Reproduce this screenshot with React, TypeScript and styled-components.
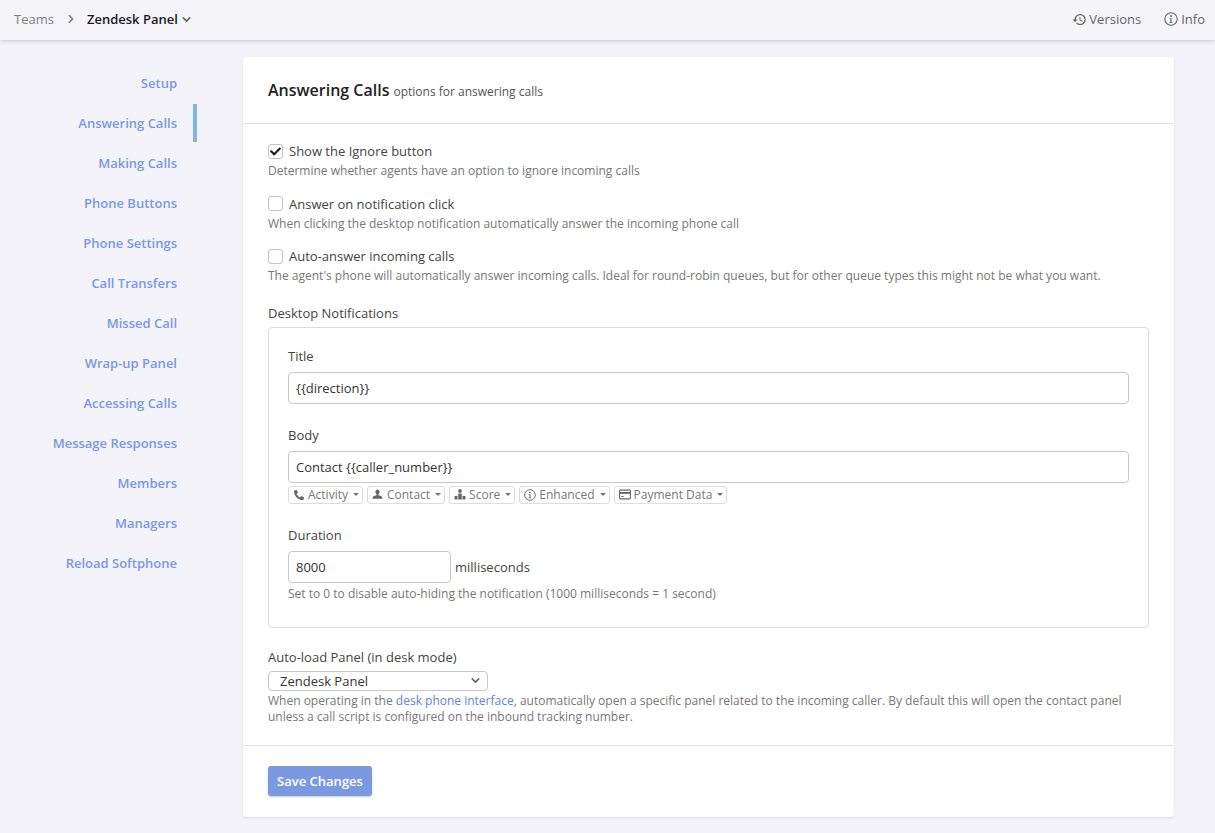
import { ReactNode } from 'react';
import styled, { createGlobalStyle } from 'styled-components';
import { FaPhoneAlt, FaCheck, FaChevronRight } from 'react-icons/fa';
import { FiChevronDown } from 'react-icons/fi';
import { MdHistory } from 'react-icons/md';

const GlobalStyle = createGlobalStyle`
  html, body {
    margin: 0;
    padding: 0;
    background: #f4f3f9;
    font-family: "Open Sans", "Liberation Sans", sans-serif;
    color: #333;
  }
  * { box-sizing: border-box; }
`;

const Page = styled.div`
  width: 1215px;
  height: 833px;
  overflow: hidden;
`;

const TopBar = styled.header`
  height: 40px;
  display: flex;
  align-items: center;
  justify-content: space-between;
  padding: 0 10px 2px 14px;
  background: #f5f4f9;
  box-shadow: 0 1px 4px rgba(0, 0, 0, 0.2);
  font-size: 13px;
`;

const Crumbs = styled.div`
  display: flex;
  align-items: center;
`;

const CrumbLink = styled.span`
  color: #808080;
`;

const CrumbSep = styled.span`
  display: flex;
  margin: 0 11px 0 12px;
  color: #808080;
  font-size: 10px;
`;

const CrumbCurrent = styled.span`
  display: flex;
  align-items: center;
  gap: 2px;
  color: #1a1a1a;
  font-weight: 600;
`;

const TopActions = styled.div`
  display: flex;
  align-items: center;
  gap: 23px;
`;

const TopAction = styled.span<{ $gap: number }>`
  display: flex;
  align-items: center;
  gap: ${(p) => p.$gap}px;
  color: #666;
  font-size: 13px;
`;

const Main = styled.div`
  display: flex;
  align-items: flex-start;
  padding-top: 17px;
`;

const SideNav = styled.nav`
  width: 197px;
  margin-top: 7px;
  flex-shrink: 0;
`;

const NavItem = styled.div<{ $active?: boolean }>`
  height: 38px;
  margin-bottom: 2px;
  display: flex;
  align-items: center;
  justify-content: flex-end;
  padding-right: 16px;
  border-right: 4px solid ${(p) => (p.$active ? '#7fb4e6' : 'transparent')};
  color: #769ae6;
  font-size: 13px;
  font-weight: 600;
`;

const Card = styled.section`
  width: 931px;
  height: 760px;
  margin-left: 46px;
  background: #fff;
  border-radius: 4px;
  box-shadow: 0 1px 3px rgba(0, 0, 0, 0.1);
`;

const CardHead = styled.div`
  height: 67px;
  padding: 22px 25px 0;
  border-bottom: 1px solid #e2e2e2;
`;

const CardTitle = styled.span`
  font-size: 16px;
  font-weight: 600;
  color: #222;
`;

const CardSub = styled.span`
  margin-left: 4px;
  font-size: 12px;
  color: #555;
`;

const CardBody = styled.div`
  height: 622px;
  padding: 17px 25px 0;
  border-bottom: 1px solid #e2e2e2;
`;

const CheckRow = styled.div`
  margin-bottom: 14.5px;
`;

const CheckLine = styled.label`
  display: flex;
  align-items: center;
  gap: 6px;
  height: 20px;
  margin-bottom: 2px;
  font-size: 13px;
  color: #444;
`;

const Box = styled.span`
  width: 15px;
  height: 15px;
  display: flex;
  align-items: center;
  justify-content: center;
  border: 1px solid #c4c4c4;
  border-radius: 3px;
  background: #fff;
  color: #222;
  font-size: 11px;
`;

const Help = styled.div`
  font-size: 12px;
  line-height: 16px;
  color: #777;
`;

const SectionLabel = styled.div`
  margin-top: 18.5px;
  height: 20px;
  line-height: 20px;
  font-size: 13px;
  color: #444;
`;

const Fieldset = styled.div`
  height: 301px;
  margin-top: 4px;
  padding: 18px 19px 0;
  border: 1px solid #ddd;
  border-radius: 4px;
`;

const FieldLabel = styled.div`
  height: 20px;
  line-height: 20px;
  margin-bottom: 6px;
  font-size: 13px;
  color: #444;
`;

const TextField = styled.div<{ $width?: number }>`
  width: ${(p) => (p.$width ? `${p.$width}px` : '100%')};
  height: 32px;
  display: flex;
  align-items: center;
  padding: 0 7px;
  border: 1px solid #c8c8c8;
  border-radius: 4px;
  font-size: 13px;
  color: #333;
`;

const Field = styled.div<{ $gap: number }>`
  margin-bottom: ${(p) => p.$gap}px;
`;

const TokenRow = styled.div`
  display: flex;
  gap: 4px;
  margin-top: 3px;
`;

const Token = styled.span`
  height: 18px;
  display: flex;
  align-items: center;
  gap: 3px;
  padding: 0 3px 0 4px;
  border: 1px solid #ddd;
  border-radius: 3px;
  font-size: 12px;
  color: #777;
`;

const TokenIcon = styled.span`
  width: 12px;
  display: flex;
  justify-content: center;
  color: #666;
`;

const Caret = styled.span`
  width: 0;
  height: 0;
  margin-left: 2px;
  border-left: 3px solid transparent;
  border-right: 3px solid transparent;
  border-top: 3px solid #777;
`;

const InlineRow = styled.div`
  display: flex;
  align-items: center;
  gap: 4px;
  font-size: 13px;
  color: #444;
`;

const DurationHelp = styled(Help)`
  margin-top: 3px;
`;

const AutoLoad = styled.div`
  margin-top: 19px;
`;

const SelectBox = styled.div`
  width: 220px;
  height: 20px;
  margin-top: -2px;
  display: flex;
  align-items: center;
  justify-content: space-between;
  padding: 0 5px 0 11px;
  border: 1px solid #c8c8c8;
  border-radius: 4px;
  font-size: 13px;
  color: #333;
`;

const HelpLink = styled.a`
  color: #5b87d8;
`;

const AutoLoadHelp = styled(Help)`
  margin-top: 2px;
`;

const CardFoot = styled.div`
  padding: 20px 25px 0;
`;

const SaveButton = styled.button`
  width: 104px;
  height: 30px;
  padding: 0;
  border: 0;
  border-radius: 3px;
  background: #7b99e0;
  box-shadow: 0 1px 2px rgba(0, 0, 0, 0.2);
  color: #fff;
  font-family: inherit;
  font-size: 13px;
  font-weight: 600;
`;

const navItems = [
  'Setup',
  'Answering Calls',
  'Making Calls',
  'Phone Buttons',
  'Phone Settings',
  'Call Transfers',
  'Missed Call',
  'Wrap-up Panel',
  'Accessing Calls',
  'Message Responses',
  'Members',
  'Managers',
  'Reload Softphone',
];

const checks = [
  {
    label: 'Show the Ignore button',
    help: 'Determine whether agents have an option to ignore incoming calls',
    checked: true,
  },
  {
    label: 'Answer on notification click',
    help: 'When clicking the desktop notification automatically answer the incoming phone call',
  },
  {
    label: 'Auto-answer incoming calls',
    help: "The agent's phone will automatically answer incoming calls. Ideal for round-robin queues, but for other queue types this might not be what you want.",
  },
];

const InfoIcon = ({ size }: { size: number }) => (
  <svg width={size} height={size} viewBox="0 0 14 14" fill="none" stroke="currentColor">
    <circle cx="7" cy="7" r="6.2" strokeWidth="1.1" />
    <circle cx="7" cy="4" r="1" fill="currentColor" stroke="none" />
    <path d="M5.6 6.2H7.6V10H8.6V10.8H5.4V10H6.4V7H5.6z" fill="currentColor" stroke="none" />
  </svg>
);

const UserIcon = () => (
  <svg width="11" height="11" viewBox="0 0 11 11" fill="currentColor">
    <path d="M3.4 2.8C3.4 1.3 4.3.4 5.5.4s2.1.9 2.1 2.4c0 1.2-.5 2.2-1.2 2.6v.9c1.5.4 3.4 1 3.9 1.8v1.6H.7V8.1c.5-.8 2.4-1.4 3.9-1.8v-.9C3.9 5 3.4 4 3.4 2.8z" />
  </svg>
);

const ScoreIcon = () => (
  <svg width="13" height="13" viewBox="0 0 13 13" fill="currentColor">
    <circle cx="6.5" cy="2.6" r="2" />
    <path d="M4.6 5.4h3.8V12H4.6zM.6 8h3.2v4H.6zM9.2 8h3.2v4H9.2z" />
  </svg>
);

const CardIcon = () => (
  <svg width="13" height="11" viewBox="0 0 13 11" fill="none" stroke="currentColor">
    <rect x="0.6" y="0.8" width="11.8" height="9.4" rx="1" strokeWidth="1.2" />
    <path d="M.6 3.8h11.8" strokeWidth="2" />
    <path d="M2.2 7.8h3" strokeWidth="1" />
  </svg>
);

const tokens: { label: string; icon: ReactNode }[] = [
  { label: 'Activity', icon: <FaPhoneAlt size={10} /> },
  { label: 'Contact', icon: <UserIcon /> },
  { label: 'Score', icon: <ScoreIcon /> },
  { label: 'Enhanced', icon: <InfoIcon size={12} /> },
  { label: 'Payment Data', icon: <CardIcon /> },
];

export default function App() {
  return (
    <Page>
      <GlobalStyle />
      <TopBar>
        <Crumbs>
          <CrumbLink>Teams</CrumbLink>
          <CrumbSep>
            <FaChevronRight />
          </CrumbSep>
          <CrumbCurrent>
            Zendesk Panel <FiChevronDown size={13} color="#666" strokeWidth={3} />
          </CrumbCurrent>
        </Crumbs>
        <TopActions>
          <TopAction $gap={2}>
            <MdHistory size={15} /> Versions
          </TopAction>
          <TopAction $gap={3}>
            <InfoIcon size={14} /> Info
          </TopAction>
        </TopActions>
      </TopBar>
      <Main>
        <SideNav>
          {navItems.map((item) => (
            <NavItem key={item} $active={item === 'Answering Calls'}>
              {item}
            </NavItem>
          ))}
        </SideNav>
        <Card>
          <CardHead>
            <CardTitle>Answering Calls</CardTitle>
            <CardSub>options for answering calls</CardSub>
          </CardHead>
          <CardBody>
            {checks.map((c) => (
              <CheckRow key={c.label}>
                <CheckLine>
                  <Box>{c.checked && <FaCheck />}</Box>
                  {c.label}
                </CheckLine>
                <Help>{c.help}</Help>
              </CheckRow>
            ))}
            <SectionLabel>Desktop Notifications</SectionLabel>
            <Fieldset>
              <Field $gap={21}>
                <FieldLabel>Title</FieldLabel>
                <TextField>{'{{direction}}'}</TextField>
              </Field>
              <Field $gap={21}>
                <FieldLabel>Body</FieldLabel>
                <TextField>{'Contact {{caller_number}}'}</TextField>
                <TokenRow>
                  {tokens.map((t) => (
                    <Token key={t.label}>
                      <TokenIcon>{t.icon}</TokenIcon>
                      {t.label}
                      <Caret />
                    </Token>
                  ))}
                </TokenRow>
              </Field>
              <Field $gap={0}>
                <FieldLabel>Duration</FieldLabel>
                <InlineRow>
                  <TextField $width={163}>8000</TextField>
                  milliseconds
                </InlineRow>
                <DurationHelp>
                  Set to 0 to disable auto-hiding the notification (1000 milliseconds = 1 second)
                </DurationHelp>
              </Field>
            </Fieldset>
            <AutoLoad>
              <FieldLabel>Auto-load Panel (in desk mode)</FieldLabel>
              <SelectBox>
                Zendesk Panel
                <FiChevronDown size={13} color="#666" strokeWidth={3} />
              </SelectBox>
              <AutoLoadHelp>
                When operating in the <HelpLink>desk phone interface</HelpLink>, automatically open a
                specific panel related to the incoming caller. By default this will open the contact panel
                <br />
                unless a call script is configured on the inbound tracking number.
              </AutoLoadHelp>
            </AutoLoad>
          </CardBody>
          <CardFoot>
            <SaveButton>Save Changes</SaveButton>
          </CardFoot>
        </Card>
      </Main>
    </Page>
  );
}
